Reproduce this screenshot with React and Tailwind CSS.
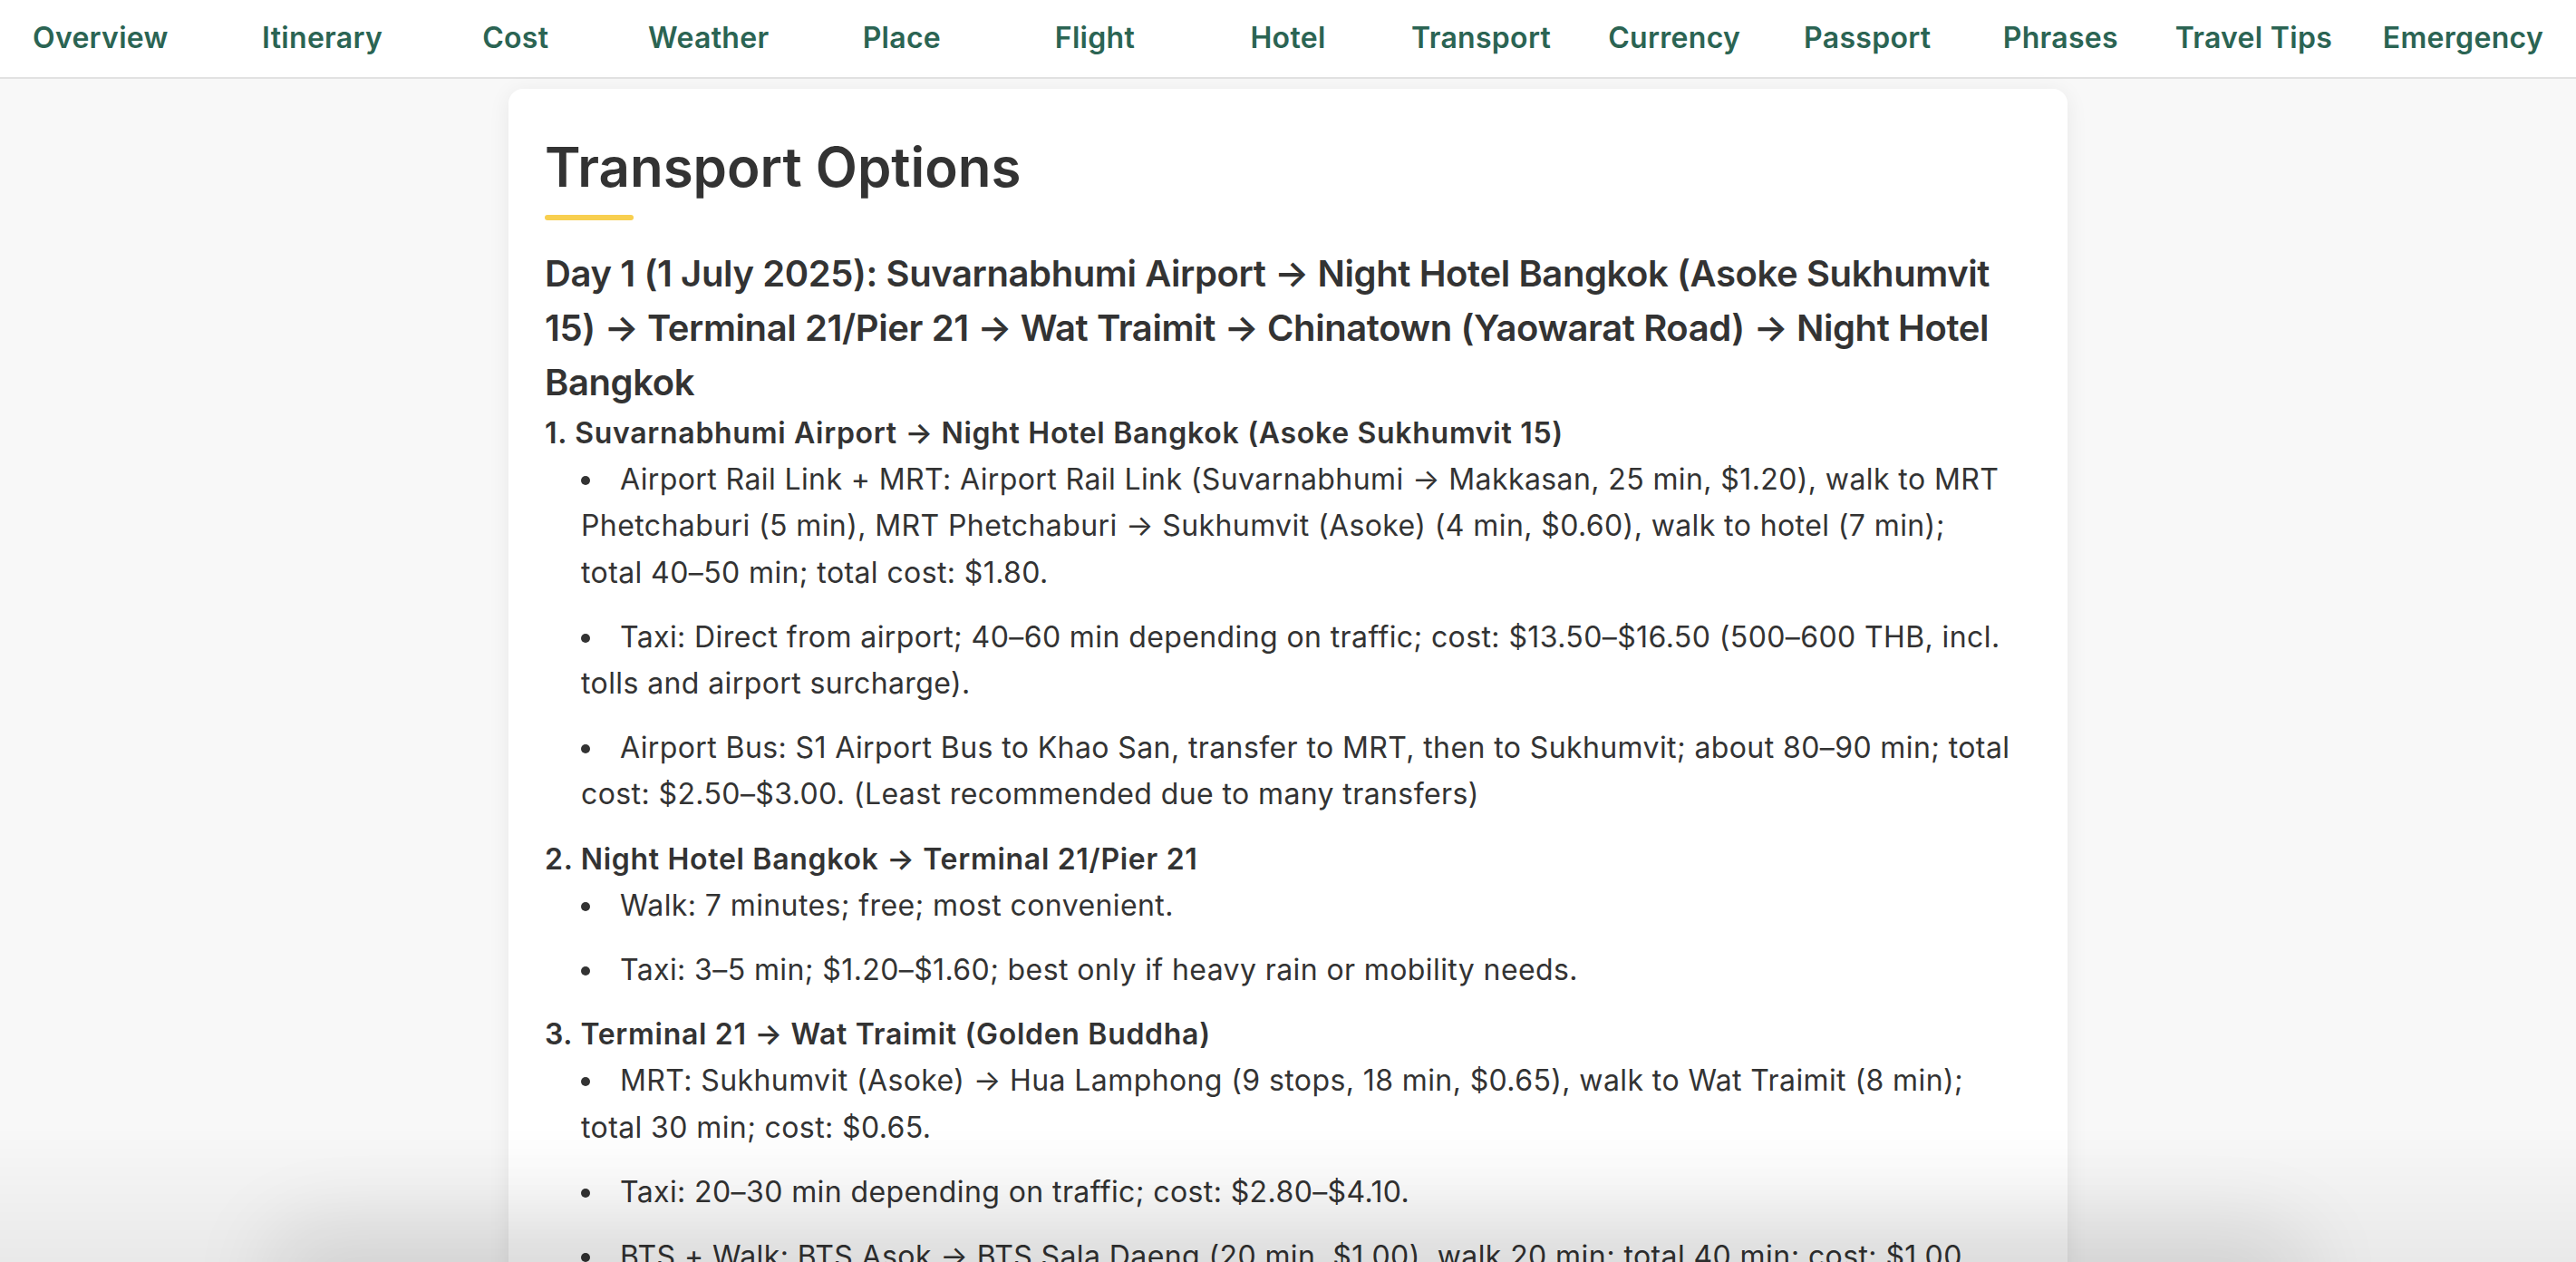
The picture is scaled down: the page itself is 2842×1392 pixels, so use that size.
import React from "react";

const NAV = ["Overview","Itinerary","Cost","Weather","Place","Flight","Hotel","Transport","Currency","Passport","Phrases","Travel Tips","Emergency"];

const SECTIONS = [
  {
    title: "1. Suvarnabhumi Airport → Night Hotel Bangkok (Asoke Sukhumvit 15)",
    items: [
      "Airport Rail Link + MRT: Airport Rail Link (Suvarnabhumi → Makkasan, 25 min, $1.20), walk to MRT Phetchaburi (5 min), MRT Phetchaburi → Sukhumvit (Asoke) (4 min, $0.60), walk to hotel (7 min); total\u00a040–50 min; total cost: $1.80.",
      "Taxi: Direct from airport; 40–60 min depending on traffic; cost: $13.50–$16.50 (500–600 THB, incl. tolls and airport surcharge).",
      "Airport Bus: S1 Airport Bus to Khao San, transfer to MRT, then to Sukhumvit; about 80–90 min; total cost: $2.50–$3.00. (Least recommended due to many transfers)",
    ],
  },
  {
    title: "2. Night Hotel Bangkok → Terminal 21/Pier 21",
    items: [
      "Walk: 7 minutes; free; most convenient.",
      "Taxi: 3–5 min; $1.20–$1.60; best only if heavy rain or mobility needs.",
    ],
  },
  {
    title: "3. Terminal 21 → Wat Traimit (Golden Buddha)",
    items: [
      "MRT: Sukhumvit (Asoke) → Hua Lamphong (9 stops, 18 min, $0.65), walk to Wat Traimit (8 min); total 30 min; cost: $0.65.",
      "Taxi: 20–30 min depending on traffic; cost: $2.80–$4.10.",
      "BTS + Walk: BTS Asok → BTS Sala Daeng (20 min, $1.00), walk 20 min; total 40 min; cost: $1.00.",
    ],
  },
  {
    title: "4. Wat Traimit → Chinatown (Yaowarat Road)",
    items: [
      "Walk: 10 minutes; free; easiest option.",
      "Taxi: 5 min; $1.20–$1.60.",
    ],
  },
];

export default function App() {
  return (
    <div
      className="min-h-screen bg-[#f8f8f8] text-[#333333]"
      style={{ fontFamily: "Inter, 'Noto Sans', sans-serif" }}
    >
      <nav className="h-[87px] bg-white border-b-2 border-[#e2e2e2] flex items-center px-[36px]">
        {NAV.map((n, i) => (
          <div
            key={n}
            className={
              "flex-1 text-[32px] font-semibold tracking-[0.3px] text-[#2b6453] whitespace-nowrap -mt-[2px] " +
              (i === 0 ? "text-left" : i === NAV.length - 1 ? "text-right" : "text-center")
            }
          >
            {n}
          </div>
        ))}
      </nav>

      <main className="pt-[11px] pb-[40px]">
        <div className="w-[1720px] mx-auto bg-white rounded-[16px] shadow-[0_4px_24px_rgba(0,0,0,0.07)] px-[40px] pt-[50px] pb-[40px]">
          <h2 className="text-[60px] leading-[72px] font-semibold text-[#333333]">Transport Options</h2>
          <div className="mt-[17px] w-[98px] h-[6px] rounded-full bg-[#f8cf4f]"></div>

          <h3 className="mt-[29px] text-[40px] leading-[60px] font-semibold tracking-[-0.4px] text-[#333333]">
            Day 1 (1 July 2025): Suvarnabhumi Airport → Night Hotel Bangkok (Asoke Sukhumvit 15) → Terminal 21/Pier 21 → Wat Traimit → Chinatown (Yaowarat Road) → Night Hotel Bangkok
          </h3>

          {SECTIONS.map((s) => (
            <div key={s.title}>
              <h4 className="text-[32px] leading-[51.2px] font-semibold tracking-[0.7px] text-[#333333]">{s.title}</h4>
              <ul className="list-disc list-inside pl-[40px]">
                {s.items.map((it) => (
                  <li key={it} className="text-[32px] leading-[51.2px] mb-[20px] tracking-[0.4px] text-[#333333]">
                    {it}
                  </li>
                ))}
              </ul>
            </div>
          ))}
        </div>
      </main>

      <div className="fixed inset-x-0 bottom-0 h-[150px] pointer-events-none bg-gradient-to-b from-transparent to-[rgba(0,0,0,0.06)]"></div>
      <div className="fixed left-1/2 -translate-x-1/2 bottom-[-50px] w-[2200px] h-[50px] rounded-full pointer-events-none shadow-[0_-10px_90px_30px_rgba(0,0,0,0.10)]"></div>
    </div>
  );
}
